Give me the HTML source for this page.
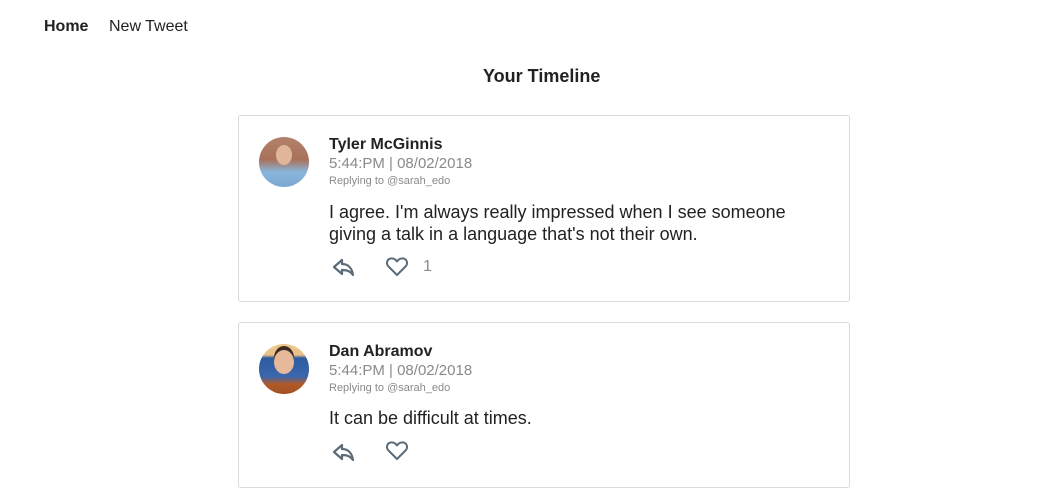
<!DOCTYPE html>
<html><head><meta charset="utf-8"><style>
body{margin:0;width:1052px;height:502px;background:#fff;font-family:"Liberation Sans",Arial,sans-serif;color:#222;position:relative;overflow:hidden}
.a{position:absolute;white-space:nowrap}
.card{position:absolute;left:238px;width:610px;border:1px solid #dadada;border-radius:3px}
.av{position:absolute;left:20px;width:50px;height:50px;border-radius:50%;overflow:hidden}
.n{font-weight:bold;font-size:16px;left:90px}
.t{font-size:15px;color:#8a8a8a;left:90px}
.r{font-size:11px;color:#8a8a8a;left:90px}
.b{font-size:18px;left:90px;line-height:22px}
.ic{position:absolute}
</style></head><body>
<div class="a" style="left:44px;top:18px;font-size:16px;font-weight:bold">Home</div>
<div class="a" style="left:109px;top:18px;font-size:16px">New Tweet</div>
<div class="a" style="left:483px;top:66px;font-size:18px;font-weight:bold">Your Timeline</div>

<div class="card" style="top:115px;height:185px">
 <div class="av" style="top:21px;background:linear-gradient(180deg,#b3826a 0%,#a8705a 45%,#8ab6dc 70%,#7aa8d2 100%)">
  <div style="position:absolute;left:17px;top:8px;width:16px;height:20px;border-radius:50%;background:#e0b69a"></div>
 </div>
 <div class="a n" style="top:20px">Tyler McGinnis</div>
 <div class="a t" style="top:39px">5:44:PM | 08/02/2018</div>
 <div class="a r" style="top:59px">Replying to @sarah_edo</div>
 <div class="a b" style="top:85px">I agree. I'm always really impressed when I see someone<br>giving a talk in a language that's not their own.</div>
 <svg class="ic" style="left:92px;top:140px" width="26" height="22" viewBox="0 0 26 22"><path d="M11 4 L3 11 L11 18 L11 14 C16 14 19 15 22 19 C21 12 17 8 11 8 Z" fill="none" stroke="#5c6b78" stroke-width="2.2" stroke-linejoin="round"/></svg>
 <svg class="ic" style="left:146px;top:140px" width="24" height="22" viewBox="0 0 24 22"><path d="M12 19 L3.5 10.5 C1 8 1.5 3.5 5.5 2.5 C8.5 1.8 11 4 12 5.5 C13 4 15.5 1.8 18.5 2.5 C22.5 3.5 23 8 20.5 10.5 Z" fill="none" stroke="#5c6b78" stroke-width="2" stroke-linejoin="round"/></svg>
 <div class="a" style="left:184px;top:142px;font-size:16px;color:#8a8a8a">1</div>
</div>

<div class="card" style="top:322px;height:164px">
 <div class="av" style="top:21px;background:linear-gradient(180deg,#ecc78a 0%,#e8c08a 22%,#2e5a9e 28%,#3a67ad 65%,#b05a28 80%,#a24f22 100%)">
  <div style="position:absolute;left:15px;top:6px;width:20px;height:24px;border-radius:50%;background:#e6b99a;box-shadow:0 -4px 0 #3a2a22"></div>
 </div>
 <div class="a n" style="top:20px">Dan Abramov</div>
 <div class="a t" style="top:39px">5:44:PM | 08/02/2018</div>
 <div class="a r" style="top:59px">Replying to @sarah_edo</div>
 <div class="a b" style="top:84px">It can be difficult at times.</div>
 <svg class="ic" style="left:92px;top:118px" width="26" height="22" viewBox="0 0 26 22"><path d="M11 4 L3 11 L11 18 L11 14 C16 14 19 15 22 19 C21 12 17 8 11 8 Z" fill="none" stroke="#5c6b78" stroke-width="2.2" stroke-linejoin="round"/></svg>
 <svg class="ic" style="left:146px;top:117px" width="24" height="22" viewBox="0 0 24 22"><path d="M12 19 L3.5 10.5 C1 8 1.5 3.5 5.5 2.5 C8.5 1.8 11 4 12 5.5 C13 4 15.5 1.8 18.5 2.5 C22.5 3.5 23 8 20.5 10.5 Z" fill="none" stroke="#5c6b78" stroke-width="2" stroke-linejoin="round"/></svg>
</div>
</body></html>
